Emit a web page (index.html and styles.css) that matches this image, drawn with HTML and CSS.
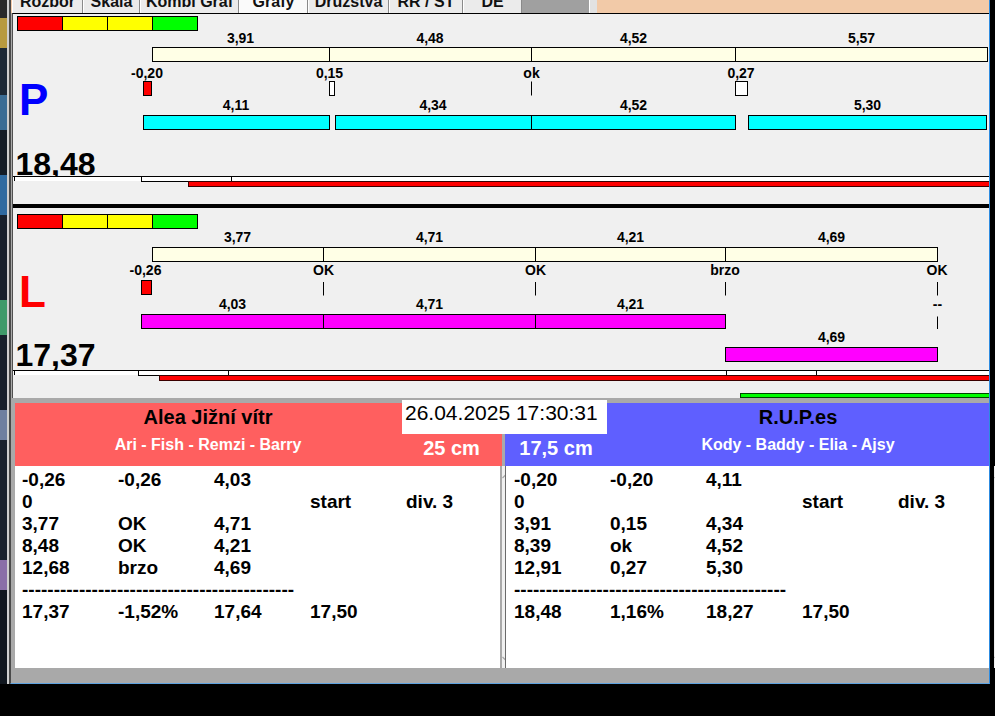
FILE: index.html
```html
<!DOCTYPE html>
<html lang="cs">
<head>
  <meta charset="UTF-8">
  <title>Grafy</title>
  <link rel="stylesheet" href="styles.css">
</head>
<body>
  <div class="screen">
    <div class="desktop"></div>

    <div class="window">
      <div class="tabbar">
        <div class="tab tab-rozbor"><span>Rozbor</span></div>
        <div class="tab tab-skala"><span>Skála</span></div>
        <div class="tab tab-kombi"><span>Kombi Graf</span></div>
        <div class="tab tab-grafy active"><span>Grafy</span></div>
        <div class="tab tab-druzstva"><span>Družstva</span></div>
        <div class="tab tab-rr"><span>RR / ST</span></div>
        <div class="tab tab-de"><span>DE</span></div>
        <div class="tab-fill"></div>
        <div class="tab-sep"></div>
      </div>

      <div class="charts">
        <!-- dráha P -->
        <svg class="lane" viewBox="13 14 976 190" width="976" height="190">
          <rect class="red" x="17.5" y="16.5" width="45" height="14"/>
          <rect class="yellow" x="62.5" y="16.5" width="45" height="14"/>
          <rect class="yellow" x="107.5" y="16.5" width="45" height="14"/>
          <rect class="green" x="152.5" y="16.5" width="45" height="14"/>

          <text x="240.5" y="43">3,91</text>
          <text x="430" y="43">4,48</text>
          <text x="633.5" y="43">4,52</text>
          <text x="861.5" y="43">5,57</text>
          <rect class="cream" x="152.5" y="47.5" width="835" height="14"/>
          <line x1="329.5" y1="47.5" x2="329.5" y2="61.5"/>
          <line x1="531.5" y1="47.5" x2="531.5" y2="61.5"/>
          <line x1="735.5" y1="47.5" x2="735.5" y2="61.5"/>

          <text x="147" y="78">-0,20</text>
          <text x="329.5" y="78">0,15</text>
          <text x="531.5" y="78">ok</text>
          <text x="741" y="78">0,27</text>
          <rect class="red" x="143.5" y="81.5" width="8" height="14"/>
          <rect class="white" x="329.5" y="81.5" width="5" height="14"/>
          <line x1="531.5" y1="81.5" x2="531.5" y2="95.5"/>
          <rect class="white" x="735.5" y="81.5" width="12" height="14"/>

          <text class="lane-letter lane-p" x="19" y="115">P</text>

          <text x="236" y="110">4,11</text>
          <text x="433" y="110">4,34</text>
          <text x="633.5" y="110">4,52</text>
          <text x="867.5" y="110">5,30</text>
          <rect class="cyan" x="143.5" y="115.5" width="186" height="14"/>
          <rect class="cyan" x="335.5" y="115.5" width="400" height="14"/>
          <line x1="531.5" y1="115.5" x2="531.5" y2="129.5"/>
          <rect class="cyan" x="748.5" y="115.5" width="238" height="14"/>

          <text class="lane-total" x="15.5" y="174.5">18,48</text>

          <rect class="band" x="13" y="177" width="976" height="4"/>
          <line x1="13" y1="176.5" x2="989" y2="176.5"/>
          <line x1="14.5" y1="176.5" x2="14.5" y2="181"/>
          <rect class="frame" x="141.5" y="176.5" width="90" height="5"/>
          <rect class="progress" x="188.5" y="181.5" width="801" height="5"/>
        </svg>

        <div class="lane-gap"></div>

        <!-- dráha L -->
        <svg class="lane" viewBox="13 208 976 190" width="976" height="190">
          <rect class="red" x="17.5" y="214.5" width="45" height="14"/>
          <rect class="yellow" x="62.5" y="214.5" width="45" height="14"/>
          <rect class="yellow" x="107.5" y="214.5" width="45" height="14"/>
          <rect class="green" x="152.5" y="214.5" width="45" height="14"/>

          <text x="237.5" y="242">3,77</text>
          <text x="429.5" y="242">4,71</text>
          <text x="630.5" y="242">4,21</text>
          <text x="831.5" y="242">4,69</text>
          <rect class="cream" x="152.5" y="247.5" width="785" height="14"/>
          <line x1="323.5" y1="247.5" x2="323.5" y2="261.5"/>
          <line x1="535.5" y1="247.5" x2="535.5" y2="261.5"/>
          <line x1="725.5" y1="247.5" x2="725.5" y2="261.5"/>

          <text x="145.5" y="275">-0,26</text>
          <text x="323.5" y="275">OK</text>
          <text x="535.5" y="275">OK</text>
          <text x="725" y="275">brzo</text>
          <text x="937" y="275">OK</text>
          <rect class="red" x="141.5" y="280.5" width="10" height="14"/>
          <line x1="323.5" y1="282" x2="323.5" y2="295.5"/>
          <line x1="535.5" y1="282" x2="535.5" y2="295.5"/>
          <line x1="725.5" y1="282" x2="725.5" y2="295.5"/>
          <line x1="937.5" y1="282" x2="937.5" y2="295.5"/>

          <text class="lane-letter lane-l" x="19" y="307">L</text>

          <text x="232.5" y="309">4,03</text>
          <text x="429.5" y="309">4,71</text>
          <text x="630.5" y="309">4,21</text>
          <text x="937.5" y="309">--</text>
          <rect class="magenta" x="141.5" y="314.5" width="584" height="14"/>
          <line x1="323.5" y1="314.5" x2="323.5" y2="328.5"/>
          <line x1="535.5" y1="314.5" x2="535.5" y2="328.5"/>
          <line x1="937.5" y1="316.5" x2="937.5" y2="329"/>

          <text x="831.5" y="342">4,69</text>
          <rect class="magenta" x="725.5" y="347.5" width="212" height="14"/>

          <text class="lane-total" x="15.5" y="365.7">17,37</text>

          <rect class="band" x="13" y="371" width="976" height="4"/>
          <line x1="13" y1="370.5" x2="989" y2="370.5"/>
          <line x1="14.5" y1="370.5" x2="14.5" y2="375"/>
          <rect class="frame" x="138.5" y="370.5" width="90" height="5"/>
          <rect class="frame" x="726.5" y="370.5" width="90" height="5"/>
          <rect class="progress" x="159.5" y="375.5" width="830" height="5"/>
          <rect class="finish" x="740.5" y="393.5" width="249" height="4"/>
        </svg>
      </div>

      <div class="teams">
        <div class="team team-left">
          <div class="team-head">
            <div class="team-names">
              <div class="team-title">Alea Jižní vítr</div>
              <div class="team-members">Ari - Fish - Remzi - Barry</div>
            </div>
            <div class="team-gap">25 cm</div>
          </div>
          <div class="log">
            <div class="log-body">
              <div class="log-row"><span>-0,26</span><span>-0,26</span><span>4,03</span><span></span><span></span></div>
              <div class="log-row"><span>0</span><span></span><span></span><span>start</span><span>div. 3</span></div>
              <div class="log-row"><span>3,77</span><span>OK</span><span>4,71</span><span></span><span></span></div>
              <div class="log-row"><span>8,48</span><span>OK</span><span>4,21</span><span></span><span></span></div>
              <div class="log-row"><span>12,68</span><span>brzo</span><span>4,69</span><span></span><span></span></div>
              <div class="log-rule">-------------------------------------------</div>
              <div class="log-row"><span>17,37</span><span>-1,52%</span><span>17,64</span><span>17,50</span><span></span></div>
            </div>
            <div class="scrollbar">
              <svg width="9" height="6" viewBox="0 0 9 6"><path d="M0.5 5 L4.5 1 L8.5 5"/></svg>
              <svg width="9" height="6" viewBox="0 0 9 6"><path d="M0.5 1 L4.5 5 L8.5 1"/></svg>
            </div>
          </div>
        </div>

        <div class="team team-right">
          <div class="team-head">
            <div class="team-gap">17,5 cm</div>
            <div class="team-names">
              <div class="team-title">R.U.P.es</div>
              <div class="team-members">Kody - Baddy - Elia - Ajsy</div>
            </div>
          </div>
          <div class="log">
            <div class="log-body">
              <div class="log-row"><span>-0,20</span><span>-0,20</span><span>4,11</span><span></span><span></span></div>
              <div class="log-row"><span>0</span><span></span><span></span><span>start</span><span>div. 3</span></div>
              <div class="log-row"><span>3,91</span><span>0,15</span><span>4,34</span><span></span><span></span></div>
              <div class="log-row"><span>8,39</span><span>ok</span><span>4,52</span><span></span><span></span></div>
              <div class="log-row"><span>12,91</span><span>0,27</span><span>5,30</span><span></span><span></span></div>
              <div class="log-rule">-------------------------------------------</div>
              <div class="log-row"><span>18,48</span><span>1,16%</span><span>18,27</span><span>17,50</span><span></span></div>
            </div>
            <div class="scrollbar">
              <svg width="9" height="6" viewBox="0 0 9 6"><path d="M0.5 5 L4.5 1 L8.5 5"/></svg>
              <svg width="9" height="6" viewBox="0 0 9 6"><path d="M0.5 1 L4.5 5 L8.5 1"/></svg>
            </div>
          </div>
        </div>

        <div class="stamp">26.04.2025 17:30:31</div>
      </div>
    </div>
  </div>
</body>
</html>
```

FILE: styles.css
```css
html, body {
  margin: 0;
  padding: 0;
}
body {
  width: 995px;
  height: 716px;
  overflow: hidden;
  background-color: #000;
  font-family: "Liberation Sans", Arial, sans-serif;
}
.screen {
  display: flex;
  height: 716px;
}
.desktop {
  width: 10px;
  height: 684px;
  background:
    linear-gradient(to right, transparent 7px, #cfcfcf 7px, #cfcfcf 9px, #4a4a4a 9px),
    linear-gradient(to bottom, #2a2a2a 0, #2a2a2a 18px, #b89a40 18px, #b89a40 48px, #1c2836 48px, #1c2836 95px,
      #3b6c94 95px, #3b6c94 130px, #141c26 130px, #141c26 175px, #2f6aa0 175px, #2f6aa0 215px,
      #18202c 215px, #18202c 300px, #3f9a6a 300px, #3f9a6a 335px, #18202c 335px, #18202c 410px,
      #6f7fa0 410px, #6f7fa0 440px, #1a222e 440px, #1a222e 560px, #8a6fa8 560px, #8a6fa8 590px,
      #10161e 590px);
}
.window {
  width: 978px;
  height: 683px;
  border-right: 1px solid #2d8be0;
  border-bottom: 1px solid #5fa3e0;
  border-left: 1px solid #4a4a4a;
  background-color: #a9a9a9;
  display: flex;
  flex-direction: column;
}

/* záložky nahoře, zčásti mimo obraz */
.tabbar {
  display: flex;
  height: 13px;
  overflow: hidden;
  padding-left: 1px;
  background-color: #f2caa8;
}
.tab {
  box-sizing: border-box;
  height: 13px;
  overflow: hidden;
  border-left: 1px solid #fff;
  border-right: 1px solid #8a8a8a;
  background-color: #ebebeb;
  font-weight: bold;
  font-size: 16px;
  line-height: 13px;
  text-align: center;
  color: #111;
}
.tab span {
  display: block;
  margin-top: -5px;
  white-space: nowrap;
}
.tab.active {
  background-color: #fafafa;
}
.tab-rozbor { width: 71px; }
.tab-skala { width: 57px; }
.tab-kombi { width: 99px; }
.tab-grafy { width: 69px; }
.tab-druzstva { width: 81px; }
.tab-rr { width: 74px; }
.tab-de { width: 59px; }
.tab-fill {
  width: 67px;
  background-color: #a0a0a0;
}
.tab-sep {
  width: 7px;
  border-left: 1px solid #fff;
  background-color: #e2e2e2;
}

/* grafy drah */
.charts {
  margin-left: 1px;
  border-left: 1px solid #505050;
  border-top: 1px solid #000;
  background-color: #f0f0f0;
}
.lane {
  display: block;
  width: 976px;
  height: 190px;
}
.lane-gap {
  height: 4px;
  background-color: #000;
}
.lane text {
  font-family: "Liberation Sans", Arial, sans-serif;
  font-weight: bold;
  font-size: 14px;
  text-anchor: middle;
  fill: #000;
}
.lane rect {
  stroke: #000;
  stroke-width: 1;
}
.lane line {
  stroke: #000;
  stroke-width: 1;
}
.lane .red { fill: #ff0000; }
.lane .yellow { fill: #ffff00; }
.lane .green { fill: #00ff00; }
.lane .cream { fill: #ffffe6; }
.lane .white { fill: #fff; }
.lane .cyan { fill: #00ffff; }
.lane .magenta { fill: #ff00ff; }
.lane .band {
  fill: #fff;
  stroke: none;
}
.lane .frame { fill: none; }
.lane .progress {
  fill: #ff0000;
  stroke: #3a0000;
}
.lane .finish {
  fill: #00ff00;
  stroke: #004400;
}
.lane .lane-letter {
  font-size: 44px;
  text-anchor: start;
}
.lane .lane-p { fill: #0000ff; }
.lane .lane-l { fill: #ff0000; }
.lane .lane-total {
  font-size: 32px;
  text-anchor: start;
}

/* družstva */
.teams {
  position: relative;
  display: flex;
  gap: 3px;
  margin-top: 5px;
  padding-left: 4px;
  height: 265px;
}
.team {
  display: flex;
  flex-direction: column;
}
.team-left { width: 487px; }
.team-right { width: 484px; }
.team-head {
  display: flex;
  height: 63px;
}
.team-left .team-head { background-color: #ff5f5f; }
.team-right .team-head { background-color: #5f5fff; }
.team-names {
  flex: 1;
  text-align: center;
  padding-top: 4px;
}
.team-title {
  font-weight: bold;
  font-size: 20px;
  line-height: 20px;
  color: #000;
}
.team-members {
  margin-top: 9px;
  font-weight: bold;
  font-size: 16px;
  line-height: 18px;
  color: #fff;
}
.team-gap {
  align-self: flex-end;
  padding-bottom: 8px;
  font-weight: bold;
  font-size: 20px;
  line-height: 20px;
  color: #fff;
  text-align: center;
}
.team-left .team-gap { width: 101px; }
.team-right .team-gap { width: 102px; }

.log {
  display: flex;
  height: 202px;
  background-color: #fff;
}
.team-left .log { margin-right: 2px; }
.team-right .log { border-left: 1px solid #6a6a6a; }
.log-body {
  flex: 1;
  padding: 3px 0 0 7px;
  font-weight: bold;
  font-size: 19px;
  line-height: 22px;
  color: #000;
}
.team-right .log-body { padding-left: 8px; }
.log-row {
  display: grid;
  grid-template-columns: repeat(5, 96px);
  height: 22px;
  white-space: nowrap;
}
.log-rule {
  height: 22px;
  white-space: nowrap;
}
.scrollbar {
  width: 17px;
  box-sizing: border-box;
  padding: 7px 0 6px;
  background-color: #f0f0f0;
  display: flex;
  flex-direction: column;
  justify-content: space-between;
  align-items: center;
}
.scrollbar path {
  fill: none;
  stroke: #a6a6a6;
  stroke-width: 1.2;
}

.stamp {
  position: absolute;
  left: 391px;
  top: -3px;
  width: 205px;
  height: 34px;
  box-sizing: border-box;
  padding-left: 3px;
  background-color: #fff;
  font-size: 21px;
  line-height: 26px;
  color: #000;
  white-space: nowrap;
}
```
